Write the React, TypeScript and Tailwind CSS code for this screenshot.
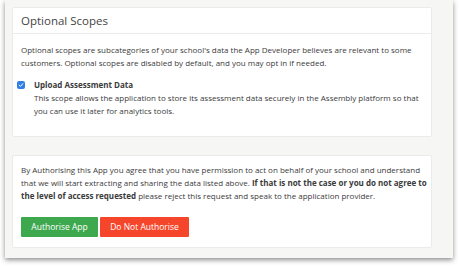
export default function App() {
  return (
    <div className="w-[460px] h-[267px] bg-white font-['Open_Sans',sans-serif] text-[#3b3b3b]">
      <div className="ml-[5px] w-[448px] h-[258px] bg-[#f6f6f4] shadow-[0_2px_5px_rgba(0,0,0,0.45)] pl-[7px] pr-[21px] pt-[7px]">
        <div className="h-[130px] bg-white border border-[#ebebe9] rounded-[2px]">
          <div className="h-[26px] border-b border-[#ebebe9] pl-[8px] flex items-center">
            <h2 className="text-[11.5px] text-[#444]">Optional Scopes</h2>
          </div>
          <div className="pl-[8px] pr-[6px] pt-[9px] text-[8px] leading-[13px]">
            <p>
              Optional scopes are subcategories of your school's data the App Developer believes are relevant to some
              customers. Optional scopes are disabled by default, and you may opt in if needed.
            </p>
            <div className="mt-[9px] -ml-[4px] flex gap-[9px]">
              <div className="pt-[3px]">
                <span className="w-[8px] h-[8px] rounded-[2px] bg-[#2f7fe6] flex items-center justify-center">
                  <svg viewBox="0 0 10 10" className="w-[6px] h-[6px]">
                    <path d="M2 5.2 L4.2 7.3 L8 2.8" fill="none" stroke="white" strokeWidth="1.6" strokeLinecap="round" strokeLinejoin="round" />
                  </svg>
                </span>
              </div>
              <div>
                <div className="font-bold">Upload Assessment Data</div>
                <p>
                  This scope allows the application to store its assessment data securely in the Assembly platform so that
                  <br />
                  you can use it later for analytics tools.
                </p>
              </div>
            </div>
          </div>
        </div>
        <div className="mt-[18px] h-[93px] bg-white border border-[#ebebe9] rounded-[2px] pl-[8px] pr-[6px] pt-[7px]">
          <p className="text-[8px] leading-[13px] whitespace-nowrap">
            By Authorising this App you agree that you have permission to act on behalf of your school and understand
            <br />
            that we will start extracting and sharing the data listed above.{" "}
            <span className="font-bold">If that is not the case or you do not agree to</span>
            <br />
            <span className="font-bold">the level of access requested</span> please reject this request and speak to the
            application provider.
          </p>
          <div className="mt-[15px] flex gap-[2px]">
            <button className="w-[77px] h-[20px] bg-[#3ea84f] text-white text-[8.5px] font-medium rounded-[1px]">Authorise App</button>
            <button className="w-[89px] h-[20px] bg-[#f5462b] text-white text-[8.5px] font-medium rounded-[1px]">Do Not Authorise</button>
          </div>
        </div>
      </div>
    </div>
  );
}
